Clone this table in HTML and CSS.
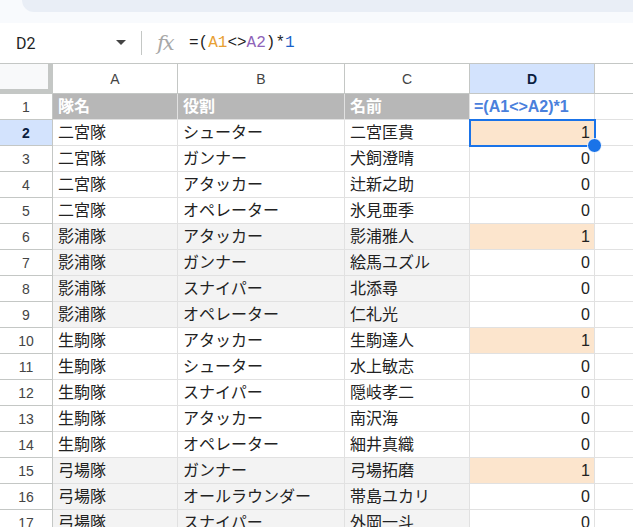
FILE: index.html
```html
<!DOCTYPE html>
<html lang="ja">
<head>
<meta charset="utf-8">
<link rel="stylesheet" href="styles.css">
</head>
<body>
<div class="top"><div class="band"></div></div>
<div class="fbar">
  <div class="namebox">D2</div>
  <svg class="caret" width="10" height="6" viewBox="0 0 10 6"><path d="M0 0h10L5 5z" fill="#444"/></svg>
  <div class="sep"></div>
  <div class="fx">fx</div>
  <div class="formula">=(<span class="r1">A1</span>&lt;&gt;<span class="r2">A2</span>)*<span class="num">1</span></div>
</div>
<div class="sheet">
  <div class="corner"></div>
  <div class="ch">A</div><div class="ch">B</div><div class="ch">C</div><div class="ch sel">D</div><div class="ch last"></div>

  <div class="rh">1</div><div class="c head">隊名</div><div class="c head">役割</div><div class="c head">名前</div><div class="c d1">=(A1&lt;&gt;A2)*1</div><div class="c last"></div>

  <div class="rh sel">2</div><div class="c">二宮隊</div><div class="c">シューター</div><div class="c">二宮匡貴</div><div class="c n hit active">1<span class="handle"></span></div><div class="c last"></div>
  <div class="rh">3</div><div class="c">二宮隊</div><div class="c">ガンナー</div><div class="c">犬飼澄晴</div><div class="c n">0</div><div class="c last"></div>
  <div class="rh">4</div><div class="c">二宮隊</div><div class="c">アタッカー</div><div class="c">辻新之助</div><div class="c n">0</div><div class="c last"></div>
  <div class="rh">5</div><div class="c">二宮隊</div><div class="c">オペレーター</div><div class="c">氷見亜季</div><div class="c n">0</div><div class="c last"></div>

  <div class="rh">6</div><div class="c g">影浦隊</div><div class="c g">アタッカー</div><div class="c g">影浦雅人</div><div class="c n hit">1</div><div class="c last"></div>
  <div class="rh">7</div><div class="c g">影浦隊</div><div class="c g">ガンナー</div><div class="c g">絵馬ユズル</div><div class="c n">0</div><div class="c last"></div>
  <div class="rh">8</div><div class="c g">影浦隊</div><div class="c g">スナイパー</div><div class="c g">北添尋</div><div class="c n">0</div><div class="c last"></div>
  <div class="rh">9</div><div class="c g">影浦隊</div><div class="c g">オペレーター</div><div class="c g">仁礼光</div><div class="c n">0</div><div class="c last"></div>

  <div class="rh">10</div><div class="c">生駒隊</div><div class="c">アタッカー</div><div class="c">生駒達人</div><div class="c n hit">1</div><div class="c last"></div>
  <div class="rh">11</div><div class="c">生駒隊</div><div class="c">シューター</div><div class="c">水上敏志</div><div class="c n">0</div><div class="c last"></div>
  <div class="rh">12</div><div class="c">生駒隊</div><div class="c">スナイパー</div><div class="c">隠岐孝二</div><div class="c n">0</div><div class="c last"></div>
  <div class="rh">13</div><div class="c">生駒隊</div><div class="c">アタッカー</div><div class="c">南沢海</div><div class="c n">0</div><div class="c last"></div>
  <div class="rh">14</div><div class="c">生駒隊</div><div class="c">オペレーター</div><div class="c">細井真織</div><div class="c n">0</div><div class="c last"></div>

  <div class="rh">15</div><div class="c g">弓場隊</div><div class="c g">ガンナー</div><div class="c g">弓場拓磨</div><div class="c n hit">1</div><div class="c last"></div>
  <div class="rh">16</div><div class="c g">弓場隊</div><div class="c g">オールラウンダー</div><div class="c g">帯島ユカリ</div><div class="c n">0</div><div class="c last"></div>
  <div class="rh">17</div><div class="c g">弓場隊</div><div class="c g">スナイパー</div><div class="c g">外岡一斗</div><div class="c n">0</div><div class="c last"></div>
</div>
</body>
</html>
```
FILE: styles.css
```css
* { box-sizing: border-box; }
html, body { margin: 0; padding: 0; }
body {
  width: 633px;
  height: 527px;
  overflow: hidden;
  background: #fff;
  font-family: "Liberation Sans", "Noto Sans CJK JP", sans-serif;
  color: #222;
}
.top {
  height: 23px;
  background: #f8fafd;
  padding-left: 22px;
}
.band {
  height: 12px;
  background: #e9eef6;
  border-bottom-left-radius: 12px;
}
.fbar {
  height: 40px;
  display: flex;
  align-items: center;
  background: #fff;
}
.namebox {
  width: 100px;
  padding-left: 16px;
  font-size: 16px;
  color: #1f1f1f;
  font-family: "Roboto", "Liberation Sans", sans-serif;
}
.caret { margin-left: 16px; }
.sep {
  width: 1px;
  height: 24px;
  background: #c4c7c5;
  margin-left: 15px;
}
.fx {
  margin-left: 15px;
  width: 32px;
  font-family: "DejaVu Serif", serif;
  font-style: italic;
  font-size: 21px;
  line-height: 24px;
  color: #a8a8a8;
  letter-spacing: -2px;
}
.formula {
  font-family: "Liberation Mono", monospace;
  font-size: 16px;
  color: #1f1f1f;
}
.r1 { color: #e8a033; }
.r2 { color: #8e63b8; }
.num { color: #1a5fc8; }

.sheet {
  display: grid;
  grid-template-columns: 53px 125px 167px 125px 125px 1fr;
  grid-template-rows: 30px repeat(17, 26px);
  border-top: 1px solid #c4c7c5;
}
.corner {
  background: #f8f9fa;
  border-right: 5px solid #c4c7c5;
  border-bottom: 5px solid #c4c7c5;
}
.ch {
  display: flex;
  align-items: center;
  justify-content: center;
  font-size: 14px;
  color: #444;
  border-right: 1px solid #c4c7c5;
  border-bottom: 1px solid #c4c7c5;
  padding-top: 1px;
}
.ch.sel { background: #d3e3fd; color: #0b1e3f; font-weight: bold; }
.ch.last { border-right: none; }
.rh {
  display: flex;
  align-items: center;
  justify-content: center;
  font-size: 14px;
  color: #444;
  border-right: 1px solid #c4c7c5;
  border-bottom: 1px solid #c4c7c5;
}
.rh.sel { background: #d3e3fd; color: #0b1e3f; font-weight: bold; }
.c {
  position: relative;
  font-size: 16px;
  line-height: 20px;
  padding: 3px 5px 0;
  white-space: nowrap;
  overflow: visible;
  border-right: 1px solid #e1e1e1;
  border-bottom: 1px solid #e1e1e1;
}
.c.last { border-right: none; }
.c.g { background: #f3f3f3; }
.c.head {
  background: #b7b7b7;
  color: #fff;
  font-weight: bold;
}
.c.d1 {
  color: #4a80dc;
  font-weight: bold;
  padding-left: 4px;
  font-size: 16px;
}
.c.n { text-align: right; padding-right: 4px; }
.c.hit { background: #fce5cd; }
.c.active {
  outline: 2px solid #1a73e8;
  outline-offset: -1px;
  z-index: 2;
}
.handle {
  position: absolute;
  right: -8px;
  bottom: -8px;
  width: 15px;
  height: 15px;
  border-radius: 50%;
  background: #1a73e8;
  border: 1px solid #fff;
}
```
